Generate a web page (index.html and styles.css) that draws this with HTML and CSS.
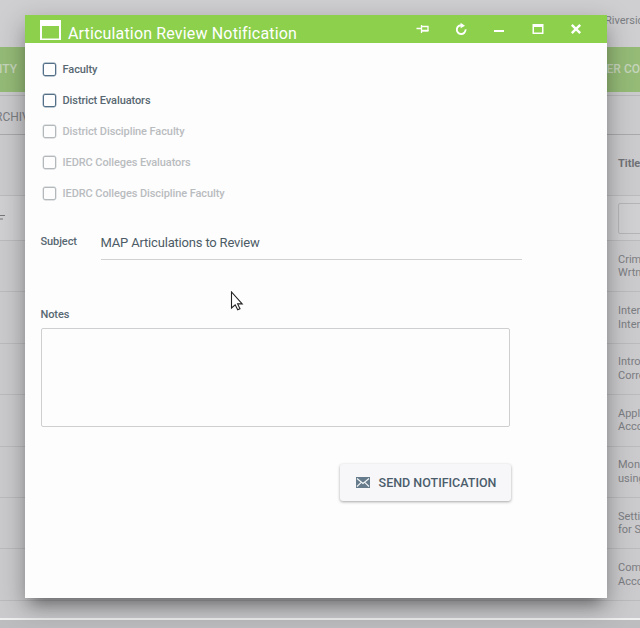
FILE: index.html
```html
<!DOCTYPE html>
<html lang="en">
<head>
<meta charset="utf-8">
<title>Articulation Review Notification</title>
<link rel="stylesheet" href="styles.css">
</head>
<body>
<div class="page">
  <header class="topbar"><span>Riverside</span></header>
  <nav class="nav"><span class="nav-left">ITY</span><span class="nav-right">HER CO</span></nav>
  <div class="tabs"><span>RCHIV</span></div>
  <div class="grid">
    <div class="row head"><b>Title</b></div>
    <div class="row filter">
      <svg class="filter-icon" width="6" height="8" viewBox="0 0 6 8"><path d="M0 1.5h5M0 5h3" stroke="#77777a" fill="none"/></svg>
      <div class="filter-box"></div>
    </div>
    <div class="row"><p>Crim<br>Wrtn</p></div>
    <div class="row"><p>Inter<br>Inter</p></div>
    <div class="row"><p>Intro<br>Corre</p></div>
    <div class="row"><p>Appl<br>Acco</p></div>
    <div class="row"><p>Mone<br>using</p></div>
    <div class="row"><p>Settin<br>for Sr</p></div>
    <div class="row"><p>Comp<br>Acco</p></div>
    <div class="tail"></div>
  </div>
</div>

<section class="dialog">
  <header class="titlebar">
    <svg class="window-icon" width="21" height="20" viewBox="0 0 21 20"><path d="M0 0h21v20H0zM2 6v12.5h17V6z" fill="#fff" fill-rule="evenodd"/></svg>
    <h1>Articulation Review Notification</h1>
    <div class="actions">
      <svg viewBox="0 0 14 14"><path d="M0.5 6.5H5M5.5 3v8M5.5 4.5H12v4.5M5.5 8.5H12" fill="none" stroke="#fff" stroke-width="1.3"/><path d="M5.5 8h7v1.6h-7z" fill="#fff"/></svg>
      <svg viewBox="0 0 14 14"><path d="M8.4 3.4A4.4 4.4 0 1 0 11.6 7.4" fill="none" stroke="#fff" stroke-width="1.9"/><path d="M6.6 0.8 11 3.7 6.6 6.3z" fill="#fff"/></svg>
      <svg viewBox="0 0 14 14"><path d="M2 8h10v2H2z" fill="#fff"/></svg>
      <svg viewBox="0 0 14 14"><path d="M1.5 2h11v10h-11zM3 5v5.6h8V5z" fill="#fff" fill-rule="evenodd"/></svg>
      <svg viewBox="0 0 14 14"><path d="M2.8 2.8l8.4 8.4M11.2 2.8l-8.4 8.4" stroke="#fff" stroke-width="2.4"/></svg>
    </div>
  </header>
  <form class="form">
    <div class="checks">
      <label class="check"><i></i>Faculty</label>
      <label class="check"><i></i>District Evaluators</label>
      <label class="check off"><i></i>District Discipline Faculty</label>
      <label class="check off"><i></i>IEDRC Colleges Evaluators</label>
      <label class="check off"><i></i>IEDRC Colleges Discipline Faculty</label>
    </div>
    <div class="subject">
      <span class="label">Subject</span>
      <div class="subject-value">MAP Articulations to Review</div>
    </div>
    <span class="label notes-label">Notes</span>
    <div class="notes"></div>
    <div class="footer">
      <button type="button" class="send">
        <svg width="14" height="11" viewBox="0 0 14 11"><path d="M0 0h14v11H0z" fill="#667b8c"/><path d="M1 1.5l6 5 6-5M1 9.5l4-3.8M13 9.5L9 5.7" fill="none" stroke="#f5f7f8" stroke-width="1.1"/></svg>
        SEND NOTIFICATION
      </button>
    </div>
  </form>
</section>

<svg class="cursor" width="14" height="20" viewBox="0 0 14 20"><path d="M1.5 1v16l3.7-3.2 2.5 5 2.3-1.1-2.4-4.8h4.6z" fill="#fff" stroke="#222" stroke-width="1.1"/></svg>
</body>
</html>
```
FILE: styles.css
```css
* { box-sizing: border-box; }
body {
  margin: 0;
  width: 640px;
  height: 628px;
  overflow: hidden;
  position: relative;
  background: #bdbcbe;
  font-family: Roboto, "Liberation Sans", sans-serif;
}
.page {
  height: 620px;
  overflow: hidden;
  background: #cbcacd;
  border-bottom: 2px solid #f0f0f1;
  color: #7b7e82;
  font-size: 11px;
  white-space: nowrap;
}
.topbar { height: 47px; padding: 14px 0 0 605px; background: #cfced1; }
.nav {
  height: 45px;
  padding-bottom: 1px;
  display: flex;
  align-items: center;
  background: #95bb77;
  color: #c6d5bc;
  font-size: 12px;
  font-weight: 500;
}
.nav-left { width: 603px; margin-left: -1px; }
.nav-right { margin-left: 1px; }
.tabs {
  height: 40px;
  margin-top: 3px;
  margin-left: -5px;
  padding-top: 13px;
  border-top: 1px solid #b7b6b9;
  border-bottom: 1px solid #a9a9ac;
  font-size: 12px;
  line-height: 16px;
}
.row {
  height: 51.4px;
  padding-left: 618px;
  display: flex;
  align-items: center;
  border-bottom: 1px solid #bbbabd;
  line-height: 13.5px;
}
.row p { margin: 0; }
.row.head { height: 61px; padding-bottom: 2px; color: #707276; }
.row.filter { height: 45px; padding-left: 0; background: #d0cfd1; }
.filter-icon { width: 6px; margin-right: 612px; flex: none; }
.filter-box { width: 60px; height: 31px; flex: none; border: 1px solid #b5b4b7; border-radius: 2px; }
.tail { height: 20px; }
.dialog {
  position: absolute;
  left: 25px;
  top: 15px;
  width: 582px;
  height: 583px;
  background: #fdfdfd;
  box-shadow: 0 11px 15px -7px rgba(0,0,0,.35), 0 9px 24px 2px rgba(0,0,0,.25);
}
.titlebar {
  height: 28px;
  padding: 0 24px 0 15px;
  display: flex;
  align-items: center;
  background: #8cd04c;
  color: #fff;
}
.window-icon { margin-top: 2px; }
.titlebar h1 { margin: 9px 0 0 7px; font-size: 16px; font-weight: 400; line-height: 20px; letter-spacing: .16px; }
.actions { margin-left: auto; display: flex; gap: 24.3px; }
.actions svg { width: 14px; height: 14px; }
.form { padding: 11px 16px 0 15.5px; color: #586872; }
.check {
  height: 31px;
  padding-left: 2px;
  display: flex;
  align-items: center;
  gap: 7px;
  font-size: 11px;
}
.check i { width: 13px; height: 13px; margin-top: -1px; border: 1.5px solid #526f87; border-radius: 2px; box-shadow: 0 0 0 .4px #7890a3; }
.check, .label { font-weight: 500; letter-spacing: -.09px; }
.check.off { color: #b9bcbf; }
.check.off i { border-color: #b3b8bb; box-shadow: 0 0 0 .4px #c4c8ca; }
.label { font-size: 11px; line-height: 14px; }
.subject { margin-top: 20px; display: flex; align-items: flex-start; }
.subject .label { width: 60px; padding-top: 6px; }
.subject-value {
  width: 421px;
  height: 31px;
  padding-top: 6px;
  border-bottom: 1px solid #cfd1d3;
  font-size: 13px;
  line-height: 16px;
  letter-spacing: -.18px;
  color: #4c5b66;
}
.notes-label { display: block; margin-top: 48px; }
.notes { width: 469px; height: 99px; margin-top: 6px; border: 1px solid #cdcfd1; border-radius: 2px; }
.footer { width: 470px; margin-top: 37px; display: flex; justify-content: flex-end; }
.send {
  width: 171px;
  height: 37px;
  padding: 0 0 0 2px;
  display: flex;
  align-items: center;
  justify-content: center;
  gap: 9px;
  border: 0;
  border-radius: 3px;
  background: #f7f7f9;
  box-shadow: 0 1px 3px rgba(0,0,0,.35);
  color: #4b5d6c;
  font: 500 12.5px Roboto, "Liberation Sans", sans-serif;
  white-space: nowrap;
}
.cursor { position: absolute; left: 230px; top: 291px; }
```
